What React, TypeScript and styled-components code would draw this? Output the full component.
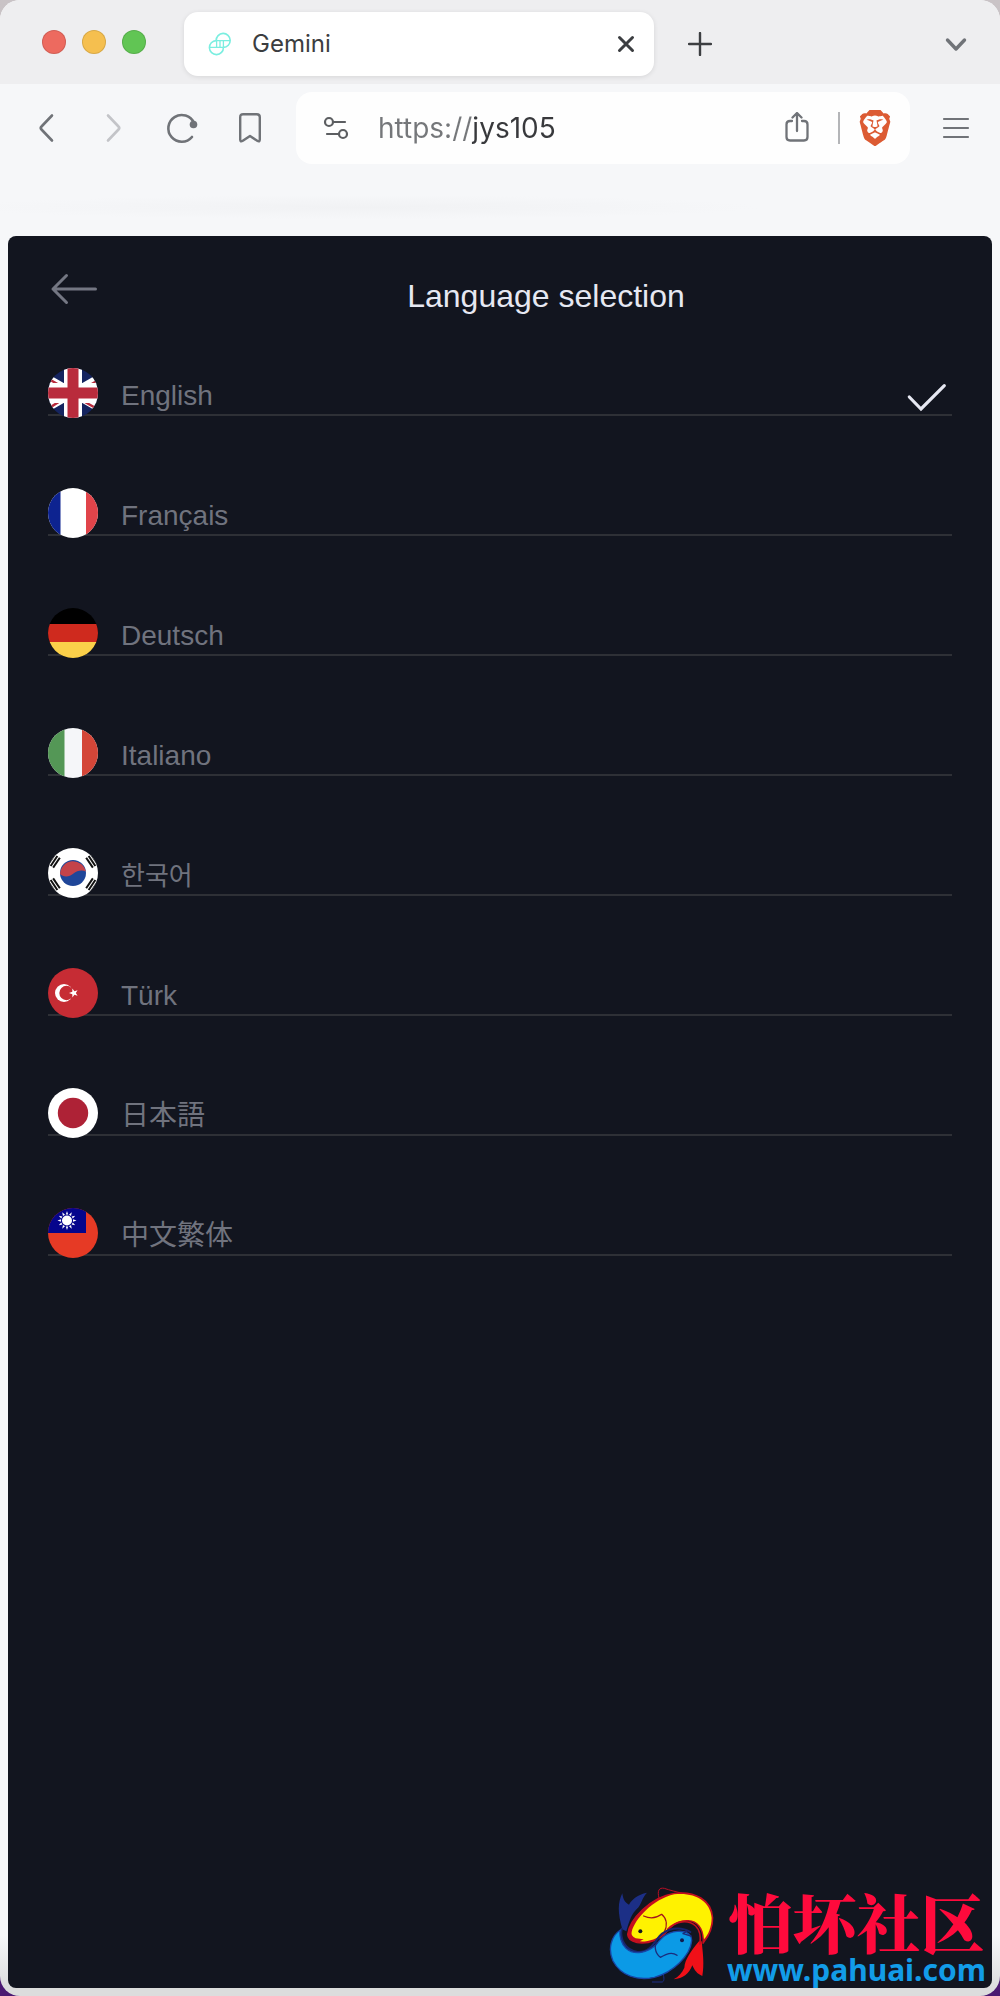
import * as React from 'react';
import styled, { createGlobalStyle } from 'styled-components';
import { SiBrave } from 'react-icons/si';

const GlobalStyle = createGlobalStyle`
  * { box-sizing: border-box; }
  body {
    margin: 0;
    background: linear-gradient(to bottom, #c9c3c6 0%, #b5b0b8 50%, #4b1a72 99%);
  }
  button {
    padding: 0;
    border: 0;
    background: none;
    font: inherit;
    color: inherit;
    cursor: pointer;
  }
`;

const BrowserWindow = styled.div`
  position: relative;
  display: flex;
  flex-direction: column;
  min-height: 100vh;
  overflow: hidden;
  border-radius: 20px;
  background: linear-gradient(to top, #dcdddd 8px, #f6f7f9 60px);
  font-family: Inter, 'Liberation Sans', sans-serif;
`;

const TitleBar = styled.header`
  display: flex;
  align-items: center;
  height: 84px;
  padding: 12px 10px 8px 42px;
  background: #eeeef0;
`;

const Lights = styled.div`
  display: flex;
  gap: 16px;
  margin: 0 38px 4px 0;
`;

const Light = styled.button<{ $color: string }>`
  width: 24px;
  height: 24px;
  border-radius: 50%;
  background: ${p => p.$color};
  box-shadow: inset 0 0 0 1px rgba(0, 0, 0, 0.12);
`;

const Tab = styled.div`
  display: flex;
  align-items: center;
  flex: 0 1 470px;
  height: 64px;
  padding: 0 18px 0 24px;
  border-radius: 14px;
  background: #fff;
  box-shadow: 0 1px 5px rgba(0, 0, 0, 0.1);
`;

const TabTitle = styled.span`
  flex: 1;
  margin-left: 20px;
  font-size: 24px;
  line-height: 32px;
  color: #3b3d40;
`;

const IconButton = styled.button<{ $width?: number; $color?: string }>`
  display: flex;
  align-items: center;
  justify-content: center;
  flex: none;
  width: ${p => p.$width || 68}px;
  height: 56px;
  color: ${p => p.$color || '#707378'};
`;

const Spacer = styled.div`
  flex: 1;
`;

const Toolbar = styled.div`
  display: flex;
  align-items: center;
  gap: 12px;
  padding: 8px 10px 0 12px;
`;

const NavButtons = styled.nav`
  display: flex;
`;

const AddressBar = styled.form`
  display: flex;
  align-items: center;
  flex: 1;
  min-width: 0;
  height: 72px;
  border-radius: 16px;
  background: #fefefe;
`;

// scheme is lighter than the host
const UrlInput = styled.input`
  flex: 1;
  min-width: 0;
  padding: 0;
  border: 0;
  outline: 0;
  font: 28px/36px Inter, 'Liberation Sans', sans-serif;
  color: transparent;
  background: linear-gradient(to right, #75777a 94px, #38393c 94px);
  -webkit-background-clip: text;
  background-clip: text;
`;

const Divider = styled.div`
  width: 2px;
  height: 32px;
  background: #b4b5b8;
`;

const BookmarkStrip = styled.div`
  height: 72px;
  background: radial-gradient(ellipse 400px 12px at 36% 60%, #f1f2f4, transparent);
`;

const Page = styled.main`
  flex: 1;
  margin: 0 8px 8px;
  padding: 36px 40px;
  border-radius: 8px;
  background: #12151f;
  font-family: 'Liberation Sans', 'Noto Sans CJK JP', sans-serif;
`;

const PageHeader = styled.div`
  display: flex;
  align-items: flex-start;
  margin-bottom: 48px;
`;

const BackButton = styled.button`
  display: flex;
  width: 92px;
  height: 34px;
  color: #747783;
`;

const Title = styled.h1`
  flex: 1;
  margin: 0;
  font-size: 32px;
  line-height: 48px;
  font-weight: 400;
  text-align: center;
  color: #e6e8f2;
`;

const LanguageList = styled.ul`
  display: flex;
  flex-direction: column;
  gap: 72px;
  margin: 0;
  padding: 0;
  list-style: none;
`;

const LanguageRow = styled.button`
  display: flex;
  align-items: flex-start;
  width: 100%;
  height: 48px;
  border-bottom: 2px solid #2e3036;
`;

const Flag = styled.svg`
  flex: none;
  width: 50px;
  height: 50px;
  margin-right: 23px;
  border-radius: 50%;
`;

const LanguageName = styled.span<{ $size?: number }>`
  flex: 1;
  padding-top: 8px;
  font-size: ${p => p.$size || 28}px;
  line-height: 40px;
  text-align: left;
  color: #70737e;
`;

const Watermark = styled.div`
  position: absolute;
  right: 14px;
  bottom: 10px;
  display: flex;
  align-items: flex-end;
  gap: 12px;
`;

const WatermarkText = styled.div`
  display: flex;
  flex-direction: column;
  align-items: center;
`;

const WatermarkName = styled.span`
  font: 900 64px/68px 'Noto Serif CJK SC', 'Noto Sans CJK SC', serif;
  color: #ff0a3c;
`;

const WatermarkUrl = styled.a`
  font: 700 30px/32px 'Noto Sans', sans-serif;
  color: #129ce8;
  text-decoration: none;
`;

const stroke = {
  fill: 'none',
  stroke: 'currentColor',
  strokeLinecap: 'round' as const,
  strokeLinejoin: 'round' as const,
};

const GeminiLogo = () => (
  <svg width="24" height="24" viewBox="0 0 24 24" fill="none" stroke="#7beee0" strokeWidth="1.6">
    <path d="M8.2 8.6A7 7 0 1 1 15.4 15.4" />
    <path d="M15.4 15.4A7 7 0 1 1 8.2 8.6" />
    <path d="M8.2 8.6H22M1.7 15.4H15.4M8.6 8.6V15.4M15.4 8.6V15.4M12 8.6V15.4" strokeWidth="1.3" />
  </svg>
);

const rays = Array.from({ length: 12 }, (_, i) => i * 30);

const trigram = (x: number, y: number, angle: number) => (
  <g transform={`translate(${x} ${y}) rotate(${angle})`} fill="#111">
    <rect x="-6" y="-4" width="12" height="2" />
    <rect x="-6" y="-1" width="12" height="2" />
    <rect x="-6" y="2" width="12" height="2" />
  </g>
);

const flags: { [code: string]: React.ReactNode } = {
  gb: (
    <>
      <rect width="50" height="50" fill="#15245f" />
      <path d="M-8 6L58 44M58 6L-8 44" stroke="#fff" strokeWidth="8" />
      <path d="M-8 6L20 22M58 8L28 25M-8 46L20 28M58 46L30 30" stroke="#b92b3c" strokeWidth="2.5" />
      <path d="M25 0V50" stroke="#fff" strokeWidth="18" />
      <path d="M0 25H50" stroke="#fff" strokeWidth="20" />
      <path d="M25 0V50" stroke="#b92b3c" strokeWidth="11" />
      <path d="M0 25H50" stroke="#b92b3c" strokeWidth="11" />
    </>
  ),
  fr: (
    <>
      <rect width="50" height="50" fill="#fff" />
      <rect width="12.5" height="50" fill="#0d2390" />
      <rect x="38" width="12" height="50" fill="#e1444a" />
    </>
  ),
  de: (
    <>
      <rect width="50" height="50" fill="#000" />
      <rect y="16" width="50" height="18" fill="#cf2a1e" />
      <rect y="34" width="50" height="16" fill="#fbd04a" />
    </>
  ),
  it: (
    <>
      <rect width="50" height="50" fill="#f5f6f9" />
      <rect width="16.5" height="50" fill="#549756" />
      <rect x="34" width="16" height="50" fill="#d44638" />
    </>
  ),
  kr: (
    <>
      <rect width="50" height="50" fill="#fff" />
      <circle cx="25" cy="25" r="13" fill="#1f4699" />
      <path d="M12.1 26A13 13 0 0 1 37.8 23.500C34 21.500 29 22.500 25.500 25.500C21 29.500 15 29 12.1 26Z" fill="#c4434a" />
      {trigram(6, 13, -56)}
      {trigram(44, 13, 56)}
      {trigram(6, 37, 56)}
      {trigram(44, 37, -56)}
    </>
  ),
  tr: (
    <>
      <rect width="50" height="50" fill="#c62c34" />
      <circle cx="16" cy="25" r="9" fill="#fff" />
      <circle cx="18.5" cy="25" r="7.2" fill="#c62c34" />
      <path d="M21 25L24.3 23.8L24.4 20.6L26.4 23.2L29.6 22.3L27.8 25L29.6 27.7L26.4 26.8L24.4 29.4L24.3 26.2Z" fill="#fff" />
    </>
  ),
  jp: (
    <>
      <rect width="50" height="50" fill="#fff" />
      <circle cx="25" cy="25" r="15.2" fill="#ae2236" />
    </>
  ),
  tw: (
    <>
      <rect width="50" height="50" fill="#e63a25" />
      <rect width="38" height="25" fill="#05058c" />
      <g fill="#fff">
        <circle cx="19" cy="12.5" r="5" />
        {rays.map(a => (
          <path key={a} d="M17.8 6.5L19 3L20.2 6.5Z" transform={`rotate(${a} 19 12.5)`} />
        ))}
      </g>
    </>
  ),
};

const languages = [
  { code: 'gb', name: 'English' },
  { code: 'fr', name: 'Français' },
  { code: 'de', name: 'Deutsch' },
  { code: 'it', name: 'Italiano' },
  { code: 'kr', name: '한국어', size: 26 },
  { code: 'tr', name: 'Türk' },
  { code: 'jp', name: '日本語' },
  { code: 'tw', name: '中文繁体' },
];

const FishLogo = () => (
  <svg width="106" height="100" viewBox="24 20 318 300" fill="none" strokeLinecap="round" strokeLinejoin="round">
    {/* fins */}
    <path d="M174 56C168 34 174 24 190 27C206 33 226 37 244 42" stroke="#b90f25" strokeWidth="3" />
    <path d="M154 308H184C192 304 188 292 186 278" stroke="#1c2f86" strokeWidth="3" />
    {/* tails */}
    <path d="M64 150C50 100 50 70 64 42C66 60 72 70 84 76C92 60 110 46 138 40C122 56 122 76 108 88C92 104 86 120 76 156Z" fill="#1c2f86" />
    <path d="M294 186C270 215 252 240 250 265C244 280 232 292 218 300C246 298 264 284 274 258C280 272 288 284 304 290C310 255 306 225 302 186Z" fill="#f01018" />
    {/* upper fish */}
    <path d="M80 165C84 122 148 52 220 42C282 34 332 62 335 115C336 145 322 172 306 192C310 150 290 126 262 124C225 122 207 145 192 163C165 187 135 194 108 190C90 186 80 178 80 165Z" fill="#c4101f" stroke="#c4101f" strokeWidth="4" />
    <path d="M92 158C102 118 156 60 220 45C280 38 328 64 332 115C332 142 322 166 309 180C308 146 290 123 262 122C225 120 206 142 190 160C166 180 140 188 116 186L128 180L104 177C94 172 90 166 92 158Z" fill="#fff200" />
    <path d="M200 150C225 124 262 120 284 140C298 154 300 172 297 194" stroke="#c4101f" strokeWidth="5" />
    <path d="M128 110C146 118 164 118 182 105C200 120 198 142 190 158" stroke="#a3141d" strokeWidth="4" />
    <circle cx="118" cy="156" r="6" fill="#14171c" />
    {/* lower fish */}
    <path d="M62 148C56 180 72 212 110 218C146 220 158 192 176 170C196 148 236 138 268 158" stroke="#18256e" strokeWidth="6" />
    <path d="M58 152C30 170 20 210 36 245C60 290 110 305 160 294C215 280 268 230 272 184C272 164 256 154 228 156C192 160 180 178 165 196C140 220 100 230 75 207C60 192 54 168 58 152Z" fill="#0b9ae6" stroke="#1745a6" strokeWidth="4" />
    <path d="M228 228C212 216 196 224 178 234C160 220 160 196 168 190" stroke="#1b2c7c" strokeWidth="4" />
    <path d="M270 170L246 163L256 156" stroke="#1b2c7c" strokeWidth="4" />
    <circle cx="243" cy="183" r="6" fill="#101c50" />
  </svg>
);

const App = () => {
  const [selected, setSelected] = React.useState('gb');

  return (
    <>
      <GlobalStyle />
      <BrowserWindow>
        <TitleBar>
          <Lights>
            <Light $color="#ed6a5f" aria-label="Close window" />
            <Light $color="#f5bf4f" aria-label="Minimize window" />
            <Light $color="#61c554" aria-label="Zoom window" />
          </Lights>
          <Tab>
            <GeminiLogo />
            <TabTitle>Gemini</TabTitle>
            <IconButton $width={20} $color="#3c3e41" aria-label="Close tab">
              <svg width="20" height="20" viewBox="0 0 20 20" {...stroke} strokeWidth="3">
                <path d="M3.5 3.5L16.5 16.5M16.5 3.5L3.5 16.5" />
              </svg>
            </IconButton>
          </Tab>
          <IconButton $width={92} $color="#3c3e41" aria-label="New tab">
            <svg width="24" height="24" viewBox="0 0 24 24" {...stroke} strokeWidth="2.4">
              <path d="M12 1V23M1 12H23" />
            </svg>
          </IconButton>
          <Spacer />
          <IconButton aria-label="Search tabs">
            <svg width="24" height="24" viewBox="0 0 24 24" {...stroke} strokeWidth="3.4">
              <path d="M3.5 8L12 17L20.5 8" />
            </svg>
          </IconButton>
        </TitleBar>

        <Toolbar>
          <NavButtons>
            <IconButton aria-label="Back">
              <svg width="32" height="32" viewBox="0 0 32 32" {...stroke} strokeWidth="2.6">
                <path d="M22 3.5L11.5 14.5Q10 16 11.5 17.5L22 28.5" />
              </svg>
            </IconButton>
            <IconButton $color="#c3c4c8" aria-label="Forward">
              <svg width="32" height="32" viewBox="0 0 32 32" {...stroke} strokeWidth="2.6">
                <path d="M10 3.5L20.5 14.5Q22 16 20.5 17.5L10 28.5" />
              </svg>
            </IconButton>
            <IconButton aria-label="Reload">
              <svg width="32" height="32" viewBox="0 0 32 32" {...stroke} strokeWidth="2.6">
                <path d="M26 25A13.4 13.4 0 1 1 28 11" />
                <circle cx="27.5" cy="12.5" r="3.8" fill="currentColor" stroke="none" />
              </svg>
            </IconButton>
            <IconButton aria-label="Bookmark">
              <svg width="32" height="32" viewBox="0 0 32 32" {...stroke} strokeWidth="2.4">
                <path d="M6.2 27.5V5.2Q6.2 2.2 9.2 2.2H22.8Q25.8 2.2 25.8 5.2V27.5Q25.8 30.5 23.2 28.8L16 24L8.8 28.8Q6.2 30.5 6.2 27.5Z" />
              </svg>
            </IconButton>
          </NavButtons>
          <AddressBar onSubmit={e => e.preventDefault()}>
            <IconButton type="button" $width={82} $color="#5c5e61" aria-label="Site settings">
              <svg width="28" height="28" viewBox="0 0 28 28" {...stroke} strokeWidth="2.2">
                <circle cx="6" cy="8" r="4" />
                <path d="M10 8H22M4 20H16" />
                <circle cx="20" cy="20" r="4" />
              </svg>
            </IconButton>
            <UrlInput type="text" defaultValue="https://jys105" aria-label="Address" spellCheck={false} />
            <IconButton type="button" $width={82} aria-label="Share">
              <svg width="32" height="32" viewBox="0 0 32 32" {...stroke} strokeWidth="2.3">
                <path d="M16 19V1.5M11.5 5.5L16 1L20.5 5.5M11 9H9Q5.5 9 5.5 12.5V25Q5.5 28.5 9 28.5H23Q26.5 28.5 26.5 25V12.5Q26.5 9 23 9H21" />
              </svg>
            </IconButton>
            <Divider />
            <IconButton type="button" $width={70} $color="#dc5b33" aria-label="Brave Shields">
              <SiBrave size={36} />
            </IconButton>
          </AddressBar>
          <IconButton aria-label="Menu">
            <svg width="28" height="24" viewBox="0 0 28 24" {...stroke} strokeWidth="2.2">
              <path d="M2 3H26M2 12H26M2 21H26" />
            </svg>
          </IconButton>
        </Toolbar>
        <BookmarkStrip />

        <Page>
          <PageHeader>
            <BackButton aria-label="Go back">
              <svg width="50" height="34" viewBox="0 0 50 34" {...stroke} strokeWidth="3">
                <path d="M47.5 17H5M18.5 3.5L5 17L18.5 30.5" />
              </svg>
            </BackButton>
            <Title>Language selection</Title>
          </PageHeader>
          <LanguageList>
            {languages.map(({ code, name, size }) => (
              <li key={code}>
                <LanguageRow aria-pressed={selected === code} onClick={() => setSelected(code)}>
                  <Flag viewBox="0 0 50 50" aria-hidden="true">{flags[code]}</Flag>
                  <LanguageName $size={size}>{name}</LanguageName>
                  {selected === code && (
                    <svg width="46" height="46" viewBox="0 0 46 46" fill="none" stroke="#e6e8f2" strokeWidth="3.2" strokeLinecap="round">
                      <path d="M3.3 29L15 41L38.3 17.7" />
                    </svg>
                  )}
                </LanguageRow>
              </li>
            ))}
          </LanguageList>
        </Page>

        <Watermark>
          <FishLogo />
          <WatermarkText>
            <WatermarkName lang="zh-CN">怕坏社区</WatermarkName>
            <WatermarkUrl href="#">www.pahuai.com</WatermarkUrl>
          </WatermarkText>
        </Watermark>
      </BrowserWindow>
    </>
  );
};

export default App;
